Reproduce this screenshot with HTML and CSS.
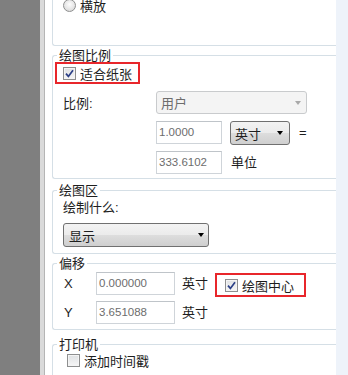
FILE: index.html
```html
<!DOCTYPE html>
<html lang="zh-CN">
<head>
    <meta charset="UTF-8">
    <title>打印 - 绘图比例</title>
    <link rel="stylesheet" href="styles.css">
</head>
<body>
    <div class="window">
        <div class="side"></div>

        <div class="panel">
            <!-- 方向 -->
            <div class="group group-top">
                <label class="opt"><span class="radio"></span>横放</label>
            </div>

            <fieldset class="group scale">
                <legend>绘图比例</legend>
                <label class="opt mark fit">
                    <span class="chk"><svg width="9" height="9" viewBox="0 0 9 9"><path d="M1 4.6 L3.4 7.4 L8 1.2" fill="none" stroke="#2b3f86" stroke-width="1.7"/></svg></span>适合纸张
                </label>
                <div class="row r-ratio">
                    <span class="lbl">比例:</span>
                    <div class="select disabled ratio">用户<i class="arrow"></i></div>
                </div>
                <div class="row r-units">
                    <span class="num">1.0000</span>
                    <div class="select unit">英寸<i class="arrow"></i></div>
                    <span class="eq">=</span>
                </div>
                <div class="row r-dwg">
                    <span class="num">333.6102</span>
                    <span class="txt">单位</span>
                </div>
            </fieldset>

            <fieldset class="group area">
                <legend>绘图区</legend>
                <div class="what">绘制什么:</div>
                <div class="select show">显示<i class="arrow"></i></div>
            </fieldset>

            <fieldset class="group offset">
                <legend>偏移</legend>
                <div class="row r-x">
                    <span class="axis">X</span>
                    <span class="num wide">0.000000</span>
                    <span class="txt">英寸</span>
                    <label class="opt mark center">
                        <span class="chk"><svg width="9" height="9" viewBox="0 0 9 9"><path d="M1 4.6 L3.4 7.4 L8 1.2" fill="none" stroke="#2b3f86" stroke-width="1.7"/></svg></span>绘图中心
                    </label>
                </div>
                <div class="row r-y">
                    <span class="axis">Y</span>
                    <span class="num wide">3.651088</span>
                    <span class="txt">英寸</span>
                </div>
            </fieldset>

            <fieldset class="group printer">
                <legend>打印机</legend>
                <label class="opt stamp"><span class="chk"></span>添加时间戳</label>
            </fieldset>
        </div>

        <div class="edge"></div>
    </div>
</body>
</html>
```

FILE: styles.css
```css
body {
    margin: 0;
    font-family: "Liberation Sans", "Noto Sans CJK SC", sans-serif;
    font-size: 13px;
    color: #1e1e1e;
}

.window {
    display: flex;
    height: 375px;
    overflow: hidden;
}

.side {
    width: 40px;
    background-color: #7f7f7f;
    border-right: 4px solid #dadada;
}

.panel {
    flex: 0 0 292px;
    box-sizing: border-box;
    border-left: 1px solid #b5b5b5;
    background-color: #fff;
    padding-left: 7px;
}

.edge {
    flex: 1;
    background-color: #eef3fa;
}

/* group boxes */
.group {
    margin: 0;
    padding: 0 0 0 10px;
    min-width: 0;
    border: 1px solid #d5dfe6;
    border-right: none;
    border-radius: 3px 0 0 3px;
}

.group legend {
    padding: 0 2px;
    margin-left: -6px;
    line-height: 13px;
}

.group-top {
    height: 45px;
    border-top: none;
    border-radius: 0 0 0 3px;
}

.scale { margin-top: 3px; padding-bottom: 4px; }
.area { margin-top: 5px; padding-bottom: 6px; }
.offset { margin-top: 3px; padding-bottom: 5px; }
.printer { margin-top: 8px; padding-bottom: 10px; }

/* checkbox / radio rows */
.opt {
    display: flex;
    align-items: center;
    gap: 4px;
    height: 10px;
    white-space: nowrap;
}

.opt.mark {
    display: inline-flex;
    box-sizing: border-box;
    height: 22px;
    border: 2px solid #e8262b;
}

.fit {
    margin-left: -8px;
    padding: 0 6px;
}

.center {
    height: 24px !important;
    margin-top: 1px;
    padding: 0 10px 0 8px;
}

.stamp {
    height: 13px;
    margin-top: 3px;
    margin-left: 4px;
}

.radio {
    width: 11px;
    height: 11px;
    border: 1px solid #8e8f8f;
    border-radius: 50%;
    background: radial-gradient(circle at 50% 40%, #fdfdfd 0, #e6e6e6 55%, #cfcfcf 100%);
}

.chk {
    display: flex;
    align-items: center;
    justify-content: center;
    width: 11px;
    height: 11px;
    border: 1px solid #8e8f8f;
    background: linear-gradient(#dfe1e3, #f6f6f6);
    box-shadow: inset 0 0 0 1px #f4f4f4;
}

/* form rows */
.row {
    display: flex;
    align-items: flex-start;
}

.r-ratio { margin-top: 7px; align-items: center; }
.r-units { margin-top: 7px; padding-left: 93px; gap: 8px; }
.r-dwg { margin-top: 6px; padding-left: 93px; gap: 9px; }
.r-x { margin-top: 2px; gap: 7px; }
.r-y { margin-top: 4px; gap: 7px; }

.lbl { width: 93px; }
.axis { width: 25px; line-height: 23px; padding-left: 1px; }
.txt, .eq { line-height: 23px; }
.eq { margin-left: 1px; }

.num {
    box-sizing: border-box;
    width: 66px;
    height: 23px;
    padding-left: 2px;
    border: 1px solid #cfd4d9;
    border-top-color: #bfc4c9;
    font-size: 11.5px;
    line-height: 21px;
    color: #6d6d6d;
}

.num.wide { width: 79px; }

.select {
    box-sizing: border-box;
    display: flex;
    align-items: center;
    justify-content: space-between;
    height: 24px;
    padding: 0 6px 0 4px;
    border: 1px solid #707070;
    border-radius: 3px;
    background: linear-gradient(#f3f3f3 0%, #ebebeb 50%, #dddddd 51%, #cfcfcf 100%);
}

.select.disabled {
    height: 23px;
    border-color: #c9cbcd;
    background: #f4f4f4;
    color: #6d6d6d;
    padding-right: 5px;
}

.ratio { width: 151px; }
.unit { width: 60px; }

.show {
    width: 146px;
    margin-top: 7px;
    padding: 0 4px 0 5px;
}

.what { margin-top: 3px; line-height: 16px; }

.arrow {
    width: 0;
    height: 0;
    border-left: 3.5px solid transparent;
    border-right: 3.5px solid transparent;
    border-top: 4px solid #000;
}

.disabled .arrow { border-top-color: #a9a9a9; }
```
